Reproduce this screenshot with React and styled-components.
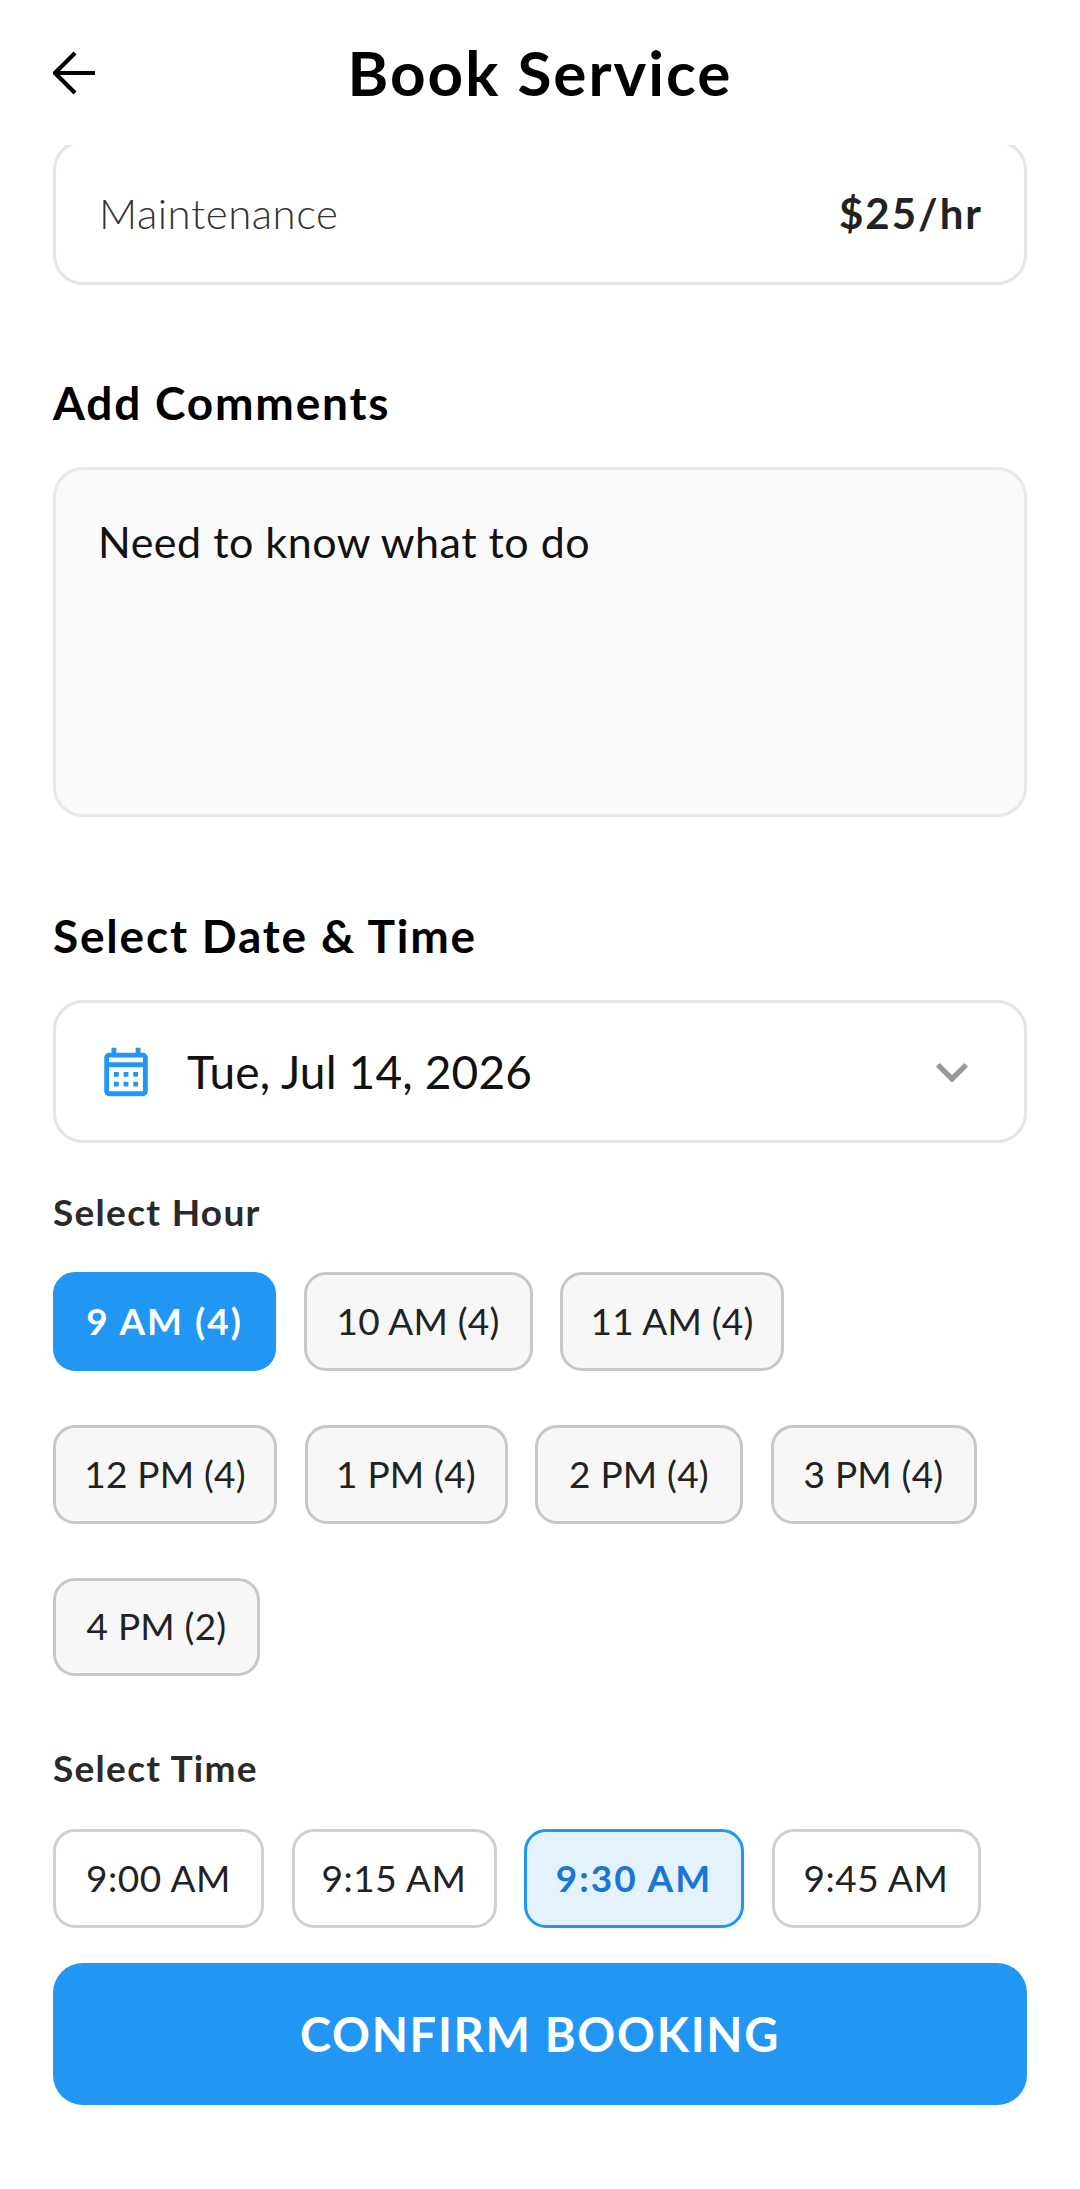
import React from 'react';
import styled, { createGlobalStyle } from 'styled-components';

const Global = createGlobalStyle`
  html, body { margin: 0; padding: 0; background: #fff; }
  * { box-sizing: border-box; }
  body { font-family: Lato, "Noto Sans", sans-serif; }
`;

const Screen = styled.div`
  width: 1080px;
  height: 2189px;
  display: flex;
  flex-direction: column;
  background: #fff;
  overflow: hidden;
`;
const Header = styled.header`
  height: 145px;
  flex: none;
  padding: 0 53px;
  display: grid;
  grid-template-columns: 42px 1fr 42px;
  align-items: center;
`;
const BackIcon = styled.svg`
  width: 42px;
  height: 44px;
  display: block;
`;
const Title = styled.h1`
  margin: 0 0 2px;
  text-align: center;
  font-size: 62px;
  line-height: 72px;
  font-weight: 700;
  color: #000;
  letter-spacing: 2px;
`;
const Body = styled.main`
  flex: 1;
  min-height: 0;
  overflow: hidden;
  padding: 0 53px;
`;
const ServiceCard = styled.section`
  margin-top: -5px;
  height: 145px;
  border: 3px solid #e5e5e5;
  border-radius: 30px;
  padding: 0 41px 0 43px;
  display: flex;
  align-items: center;
  justify-content: space-between;
`;
const ServiceName = styled.span`
  font-size: 42px;
  font-weight: 300;
  color: #333;
  letter-spacing: 0.5px;
`;
const ServicePrice = styled.span`
  font-size: 42px;
  font-weight: 700;
  color: #222;
  letter-spacing: 2px;
`;
const SectionTitle = styled.h2`
  margin: ${p => p.$top}px 0 34px;
  font-size: 46px;
  line-height: 60px;
  font-weight: 700;
  color: #000;
  letter-spacing: 1.8px;
`;
const CommentBox = styled.div`
  height: 350px;
  background: #fafafa;
  border: 3px solid #e8e8e8;
  border-radius: 30px;
  padding: 45px 42px;
  font-size: 43px;
  line-height: 54px;
  font-weight: 400;
  color: #111;
  letter-spacing: 0.5px;
`;
const DateBox = styled.div`
  height: 143px;
  border: 3px solid #e5e5e5;
  border-radius: 30px;
  padding: 0 40px 0 41px;
  display: flex;
  align-items: center;
`;
const CalendarIcon = styled.svg`
  width: 58px;
  height: 58px;
  flex: none;
  fill: #2196f3;
  margin-right: 32px;
`;
const DateText = styled.span`
  flex: 1;
  font-size: 46px;
  font-weight: 400;
  color: #111;
  letter-spacing: 0.15px;
`;
const Chevron = styled.svg`
  width: 64px;
  height: 64px;
  fill: #999;
  flex: none;
`;
const SubLabel = styled.h3`
  margin: ${p => p.$top}px 0 ${p => p.$bottom}px;
  font-size: 37px;
  line-height: 50px;
  font-weight: 700;
  color: #2a2a2a;
  letter-spacing: 1.3px;
`;
const ChipRows = styled.div`
  display: flex;
  flex-wrap: wrap;
  column-gap: 27.5px;
  row-gap: 54px;
  max-width: 974px;
`;
const Chip = styled.button`
  height: 98.75px;
  padding: 0 0 2px;
  flex: none;
  font-family: inherit;
  font-size: 37px;
  line-height: 1;
  border-radius: 22px;
  border: 3px solid #c8c8c8;
  background: #f7f7f7;
  color: #222;
  font-weight: 400;
  letter-spacing: 0.2px;
  ${p => p.$active && `
    background: #2196f3;
    border-color: #2196f3;
    color: #fff;
    font-weight: 700;
    letter-spacing: 2px;
  `}
`;
const TimeChip = styled(Chip)`
  background: ${p => (p.$active ? '#e3f2fd' : '#fff')};
  border-color: ${p => (p.$active ? '#2196f3' : '#d0d0d0')};
  color: ${p => (p.$active ? '#1976d2' : '#222')};
  letter-spacing: ${p => (p.$active ? '2px' : '0.5px')};
`;
const TimeRow = styled.div`
  display: flex;
  gap: 27.5px;
`;
const Confirm = styled.button`
  display: block;
  width: 100%;
  height: 142px;
  margin-top: 35.25px;
  border: 0;
  border-radius: 30px;
  background: #2196f3;
  color: #fff;
  font-family: inherit;
  font-size: 47px;
  font-weight: 700;
  letter-spacing: 1.7px;
`;

const hours = [
  { t: '9 AM (4)', w: 223, active: true },
  { t: '10 AM (4)', w: 229 },
  { t: '11 AM (4)', w: 224 },
  { t: '12 PM (4)', w: 224 },
  { t: '1 PM (4)', w: 203 },
  { t: '2 PM (4)', w: 208 },
  { t: '3 PM (4)', w: 206 },
  { t: '4 PM (2)', w: 207 },
];
const times = [
  { t: '9:00 AM', w: 211 },
  { t: '9:15 AM', w: 205 },
  { t: '9:30 AM', w: 220, active: true },
  { t: '9:45 AM', w: 209 },
];

export default function App() {
  return (
    <Screen>
      <Global />
      <Header>
        <BackIcon viewBox="0 0 42 44" fill="none" stroke="#000" strokeWidth="4.2">
          <path d="M42 22H3M22 2 2 22l20 20" />
        </BackIcon>
        <Title>Book Service</Title>
      </Header>
      <Body>
        <ServiceCard>
          <ServiceName>Maintenance</ServiceName>
          <ServicePrice>$25/hr</ServicePrice>
        </ServiceCard>
        <SectionTitle $top={88}>Add Comments</SectionTitle>
        <CommentBox>Need to know what to do</CommentBox>
        <SectionTitle $top={89}>Select Date &amp; Time</SectionTitle>
        <DateBox>
          <CalendarIcon viewBox="0 0 24 24">
            <path d="M19 4h-1V2h-2v2H8V2H6v2H5c-1.11 0-1.99.9-1.99 2L3 20a2 2 0 0 0 2 2h14c1.1 0 2-.9 2-2V6c0-1.1-.9-2-2-2zm0 16H5V10h14v10zm0-12H5V6h14v2zM9 14H7v-2h2v2zm4 0h-2v-2h2v2zm4 0h-2v-2h2v2zm-8 4H7v-2h2v2zm4 0h-2v-2h2v2zm4 0h-2v-2h2v2z" />
          </CalendarIcon>
          <DateText>Tue, Jul 14, 2026</DateText>
          <Chevron viewBox="0 0 24 24">
            <path d="M7.41 8.59 12 13.17l4.59-4.58L18 10l-6 6-6-6z" />
          </Chevron>
        </DateBox>
        <SubLabel $top={44} $bottom={35}>Select Hour</SubLabel>
        <ChipRows>
          {hours.map(h => (
            <Chip key={h.t} $active={h.active} style={{ width: h.w }}>{h.t}</Chip>
          ))}
        </ChipRows>
        <SubLabel $top={66.75} $bottom={36}>Select Time</SubLabel>
        <TimeRow>
          {times.map(h => (
            <TimeChip key={h.t} $active={h.active} style={{ width: h.w }}>{h.t}</TimeChip>
          ))}
        </TimeRow>
        <Confirm>CONFIRM BOOKING</Confirm>
      </Body>
    </Screen>
  );
}
